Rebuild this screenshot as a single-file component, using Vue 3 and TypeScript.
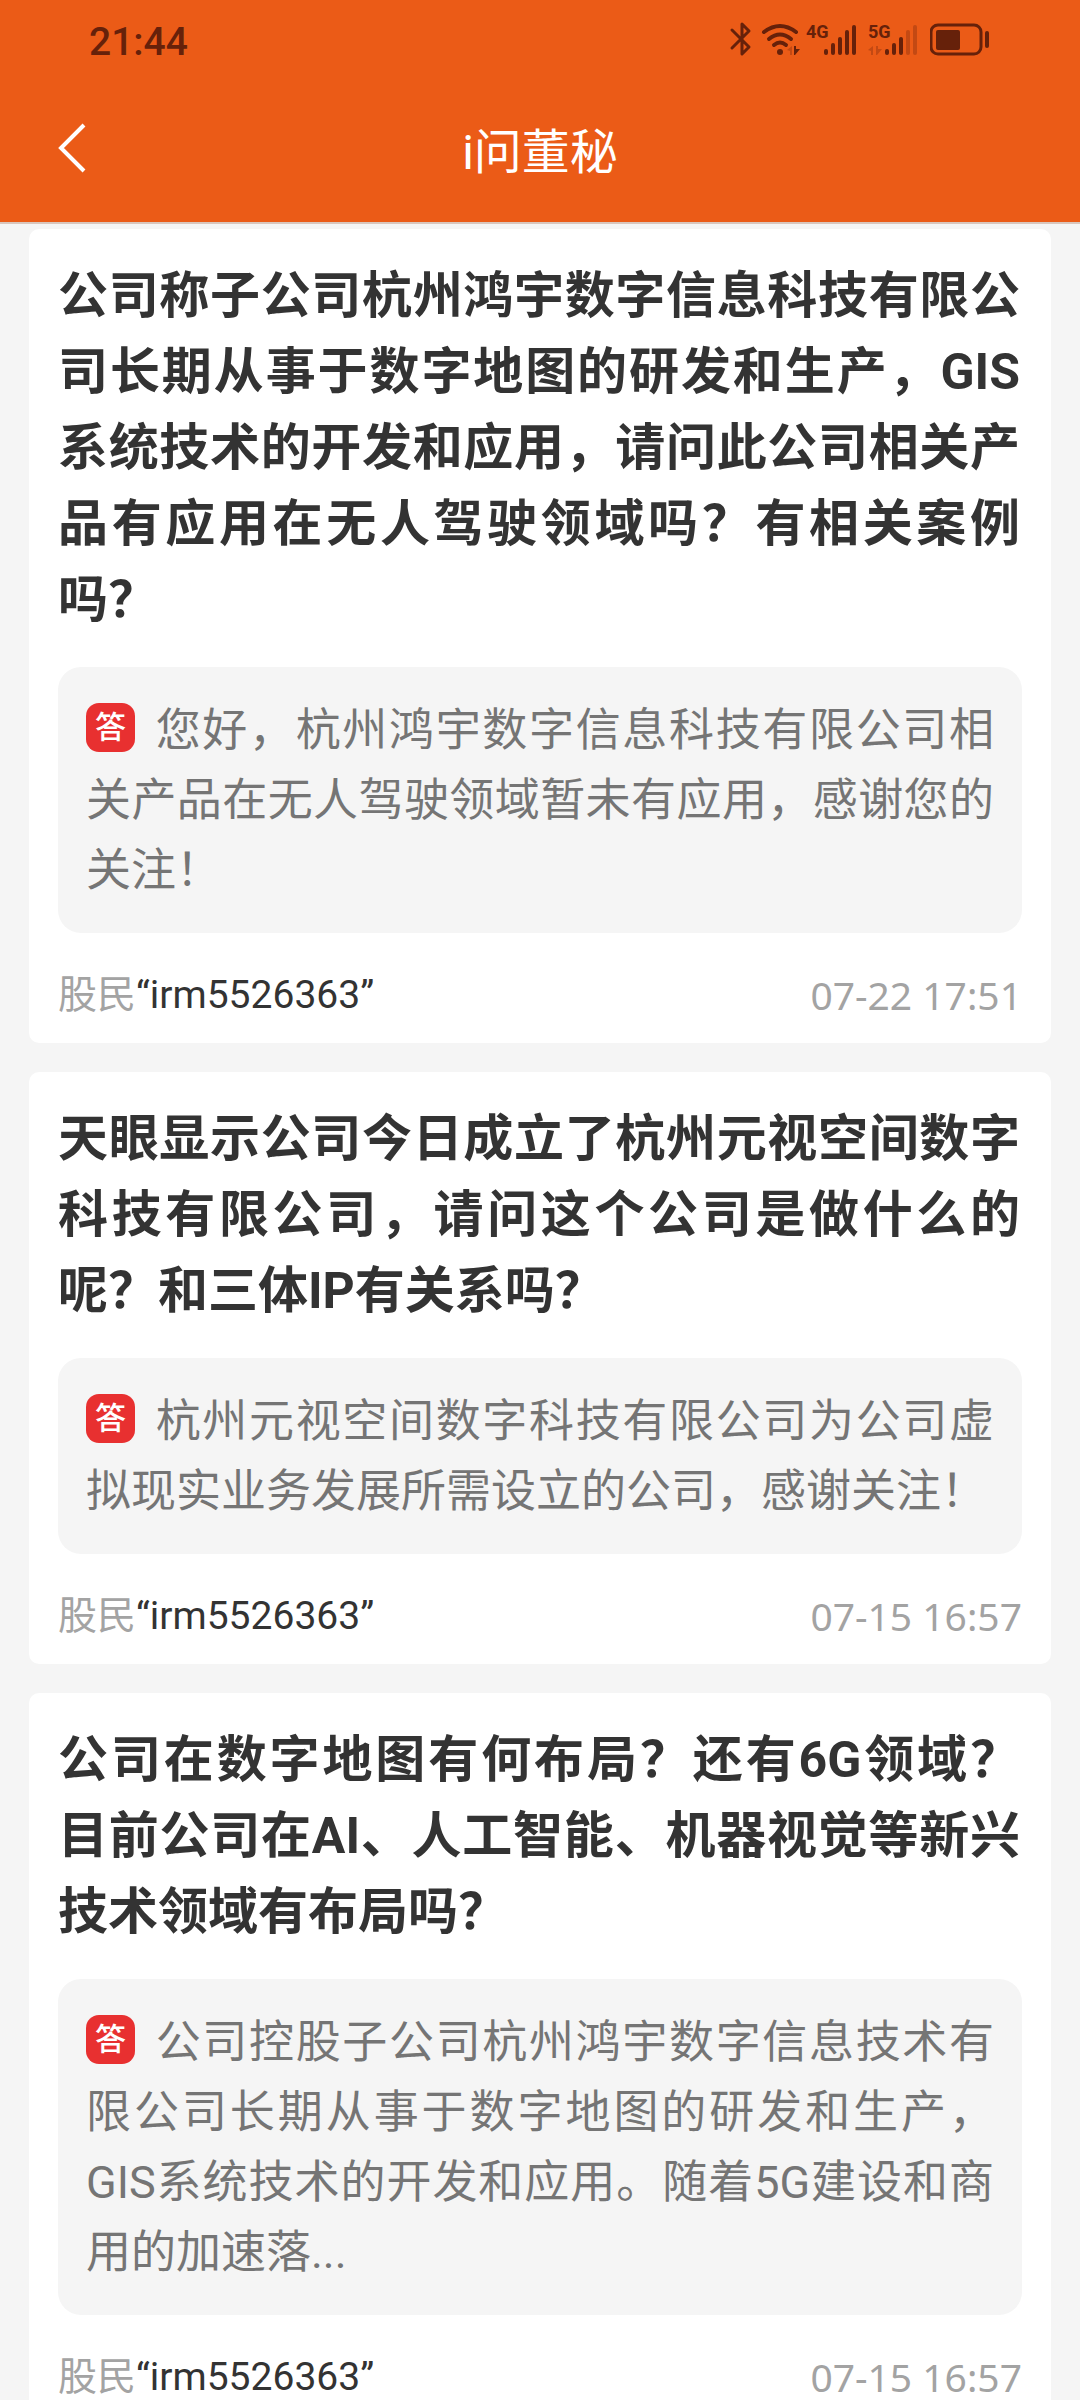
<script setup lang="ts">
interface Entry {
  id: number
  question: string
  answer: string
  user: string
  time: string
}

const entries: Entry[] = [
  {
    id: 1,
    question:
      '公司称子公司杭州鸿宇数字信息科技有限公司长期从事于数字地图的研发和生产，GIS系统技术的开发和应用，请问此公司相关产品有应用在无人驾驶领域吗？有相关案例吗？',
    answer: '您好，杭州鸿宇数字信息科技有限公司相关产品在无人驾驶领域暂未有应用，感谢您的关注！',
    user: 'irm5526363',
    time: '07-22 17:51',
  },
  {
    id: 2,
    question: '天眼显示公司今日成立了杭州元视空间数字科技有限公司，请问这个公司是做什么的呢？和三体IP有关系吗？',
    answer: '杭州元视空间数字科技有限公司为公司虚拟现实业务发展所需设立的公司，感谢关注！',
    user: 'irm5526363',
    time: '07-15 16:57',
  },
  {
    id: 3,
    question: '公司在数字地图有何布局？还有6G领域？目前公司在AI、人工智能、机器视觉等新兴技术领域有布局吗？',
    answer:
      '公司控股子公司杭州鸿宇数字信息技术有限公司长期从事于数字地图的研发和生产，GIS系统技术的开发和应用。随着5G建设和商用的加速落...',
    user: 'irm5526363',
    time: '07-15 16:57',
  },
]
</script>

<template>
  <div class="app">
    <header class="top">
      <div class="status">
        <span class="clock">21:44</span>
        <div class="indicators">
          <svg class="bluetooth" width="24" height="36" viewBox="0 0 24 36" fill="none" stroke="currentColor" stroke-width="3" stroke-linejoin="round" stroke-linecap="round" aria-hidden="true">
            <path d="M3 9 L20 26 L13 33 V3 L20 10 L3 27" />
          </svg>
          <svg class="wifi" width="40" height="36" viewBox="0 0 40 36" fill="none" stroke="currentColor" stroke-width="4" stroke-linecap="round" aria-hidden="true">
            <path d="M3 11 Q19 -1 35 11" />
            <path d="M8 18 Q19 9 30 18" />
            <path d="M13 24 Q19 19 25 24" />
            <circle cx="19" cy="31" r="3" fill="currentColor" stroke="none" />
            <path d="M26 29 L31 25 V34 H29 V30 Z" fill="currentColor" stroke="none" opacity="0.3" />
            <path d="M33 25 H35 V28 H39 L34 34 H33 Z" fill="currentColor" stroke="none" />
          </svg>
          <svg class="signal" width="52" height="36" viewBox="0 0 52 36" fill="currentColor" aria-hidden="true">
            <text x="0" y="17" class="network">4G</text>
            <rect x="18" y="28" width="4" height="6" rx="2" />
            <rect x="25" y="22" width="4" height="12" rx="2" />
            <rect x="32" y="16" width="4" height="18" rx="2" />
            <rect x="39" y="9" width="4" height="25" rx="2" />
            <rect x="46" y="4" width="4" height="30" rx="2" />
          </svg>
          <svg class="signal" width="52" height="36" viewBox="0 0 52 36" fill="currentColor" aria-hidden="true">
            <text x="0" y="17" class="network">5G</text>
            <path d="M0 29 L5 25 V34 H3 V30 Z M8 25 H10 V28 H14 L9 34 H8 Z" opacity="0.3" />
            <rect x="17" y="28" width="4" height="6" rx="2" />
            <rect x="24" y="22" width="4" height="12" rx="2" />
            <rect x="31" y="16" width="4" height="18" rx="2" />
            <rect x="38" y="9" width="4" height="25" rx="2" opacity="0.3" />
            <rect x="45" y="4" width="4" height="30" rx="2" opacity="0.3" />
          </svg>
          <svg class="battery" width="60" height="36" viewBox="0 0 60 36" fill="currentColor" aria-hidden="true">
            <rect x="1" y="4" width="50" height="29" rx="7" fill="none" stroke="currentColor" stroke-width="3" />
            <rect x="6" y="9" width="24" height="20" rx="2" />
            <rect x="55" y="10" width="4" height="17" rx="2" />
          </svg>
        </div>
      </div>
      <nav class="bar">
        <button class="back" type="button" aria-label="返回">
          <svg width="32" height="52" viewBox="0 0 32 52" fill="none" stroke="currentColor" stroke-width="4" aria-hidden="true">
            <path d="M28 3 L5 26 L28 49" />
          </svg>
        </button>
        <h1 class="heading">i问董秘</h1>
      </nav>
    </header>

    <main class="list">
      <article v-for="entry in entries" :key="entry.id" class="card">
        <h2 class="question">{{ entry.question }}</h2>
        <p class="answer"><span class="badge">答</span>{{ entry.answer }}</p>
        <footer class="meta">
          <span>股民<span class="user">“{{ entry.user }}”</span></span>
          <time class="time">{{ entry.time }}</time>
        </footer>
      </article>
    </main>
  </div>
</template>

<style>
body {
  background: #f5f5f5;
}
</style>

<style scoped>
.app {
  display: flex;
  flex-direction: column;
  height: 100vh;
  overflow: hidden;
  background: #f5f5f5;
  color: #333;
  font-family: Roboto, 'Noto Sans CJK SC', sans-serif;
}

.top {
  flex: none;
  background: #eb5b17;
  border-bottom: 2px solid #d9c6bd;
}

.status {
  display: flex;
  align-items: center;
  justify-content: space-between;
  height: 78px;
  padding: 0 90px 0 89px;
  color: #66210a;
}

.clock {
  padding-top: 6px;
  font-size: 39px;
  font-weight: 500;
  line-height: 48px;
}

.indicators {
  display: flex;
  align-items: center;
}

.bluetooth {
  margin-right: 8px;
}

.wifi {
  margin-right: 5px;
}

.signal {
  margin-right: 10px;
}

.network {
  font-family: 'Liberation Sans Narrow', Roboto, sans-serif;
  font-size: 18px;
  font-weight: 700;
}

.bar {
  display: grid;
  grid-template-columns: 120px 1fr 120px;
  align-items: center;
  height: 144px;
}

.back {
  display: flex;
  width: 88px;
  padding: 0 0 4px 56px;
  border: 0;
  background: none;
  color: #fff;
}

.heading {
  margin: 0;
  padding-top: 5px;
  color: #fff;
  font-size: 48px;
  font-weight: 400;
  line-height: 72px;
  text-align: center;
}

.list {
  display: flex;
  flex: 1;
  flex-direction: column;
  gap: 29px;
  min-height: 0;
  padding: 5px 29px 29px;
  overflow-y: auto;
  scrollbar-width: none;
}

.card {
  flex: none;
  padding: 29px 29px 0;
  border-radius: 10px;
  background: #fff;
}

.question {
  margin: 0 2px 29px 0;
  font-size: 50px;
  font-weight: 700;
  line-height: 76px;
  text-align: justify;
}

.answer {
  margin: 0;
  padding: 29px 28px 27px;
  border-radius: 23px;
  background: #f5f5f5;
  color: #757575;
  font-size: 45px;
  line-height: 70px;
  text-align: justify;
}

.badge {
  display: inline-block;
  width: 49px;
  height: 49px;
  margin-right: 19px;
  border-radius: 13px;
  background: #e83030;
  color: #fff;
  font-size: 31px;
  font-weight: 500;
  line-height: 49px;
  text-align: center;
  vertical-align: 8px;
}

.meta {
  display: flex;
  align-items: center;
  justify-content: space-between;
  height: 110px;
  padding-top: 14px;
  box-sizing: border-box;
  color: #a3a3a3;
  font-size: 39px;
  line-height: 48px;
}

.user {
  color: #333;
}

.time {
  font-family: 'Noto Sans', sans-serif;
}
</style>
